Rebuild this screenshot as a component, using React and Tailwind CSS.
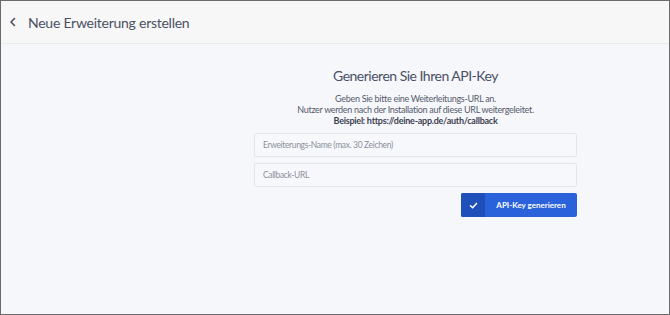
import React from 'react';

const Check = () => (
    <svg width="9" height="9" viewBox="0 0 12 12" fill="none">
        <path d="M2 6.4 L4.8 9 L10 3.2" stroke="white" strokeWidth="2" strokeLinecap="round" strokeLinejoin="round" />
    </svg>
);

export default function App() {
    return (
        <div
            className="w-[670px] h-[315px] border border-[#6b6b6b] bg-[#f6f7fb] flex flex-col overflow-hidden"
            style={{ fontFamily: 'Lato, "Noto Sans", sans-serif' }}
        >
            {/* Kopfzeile */}
            <div className="h-[43px] shrink-0 bg-[#f7f7f8] border-b border-[#e9eaef] flex items-center">
                <svg className="ml-[8px]" width="8" height="10" viewBox="0 0 8 10" fill="none">
                    <path d="M5.5 1.5 L2 5 L5.5 8.5" stroke="#4a5064" strokeWidth="1.6" strokeLinecap="round" strokeLinejoin="round" />
                </svg>
                <h1 className="ml-[11px] text-[14px] tracking-[-0.25px] text-[#4a5064]">Neue Erweiterung erstellen</h1>
            </div>

            {/* Inhalt */}
            <div className="pl-[253px] pr-[92px] pt-[22px]">
                <div className="flex flex-col">
                    <h2 className="text-center text-[14px] leading-[20px] tracking-[-0.5px] text-[#4a5064]">Generieren Sie Ihren API-Key</h2>
                    <div className="mt-[7px] text-center text-[9px] leading-[11px] tracking-[-0.3px] text-[#555b6b]">
                        <p>Geben Sie bitte eine Weiterleitungs-URL an.</p>
                        <p>Nutzer werden nach der Installation auf diese URL weitergeleitet.</p>
                        <p className="font-bold tracking-[-0.25px] text-[#3c4150]">Beispiel: https://deine-app.de/auth/callback</p>
                    </div>
                    <input
                        className="mt-[7px] h-[24px] w-full rounded-[2px] border border-[#e3e5ea] bg-[#f7f8fb] px-[8px] text-[8.5px] tracking-[-0.35px] text-[#4a5064] placeholder:text-[#8b909b] outline-none"
                        placeholder="Erweiterungs-Name (max. 30 Zeichen)"
                    />
                    <input
                        className="mt-[6px] h-[24px] w-full rounded-[2px] border border-[#e3e5ea] bg-[#f7f8fb] px-[8px] text-[8.5px] tracking-[-0.35px] text-[#4a5064] placeholder:text-[#8b909b] outline-none"
                        placeholder="Callback-URL"
                    />
                    <div className="mt-[6px] flex justify-end">
                        <button className="flex h-[24px] w-[116px] overflow-hidden rounded-[2px] bg-[#2a62dc] text-white">
                            <span className="flex h-full w-[24px] items-center justify-center bg-[#1f4fb8]">
                                <Check />
                            </span>
                            <span className="flex flex-1 items-center justify-center text-[8px] font-bold">API-Key generieren</span>
                        </button>
                    </div>
                </div>
            </div>
        </div>
    );
}
